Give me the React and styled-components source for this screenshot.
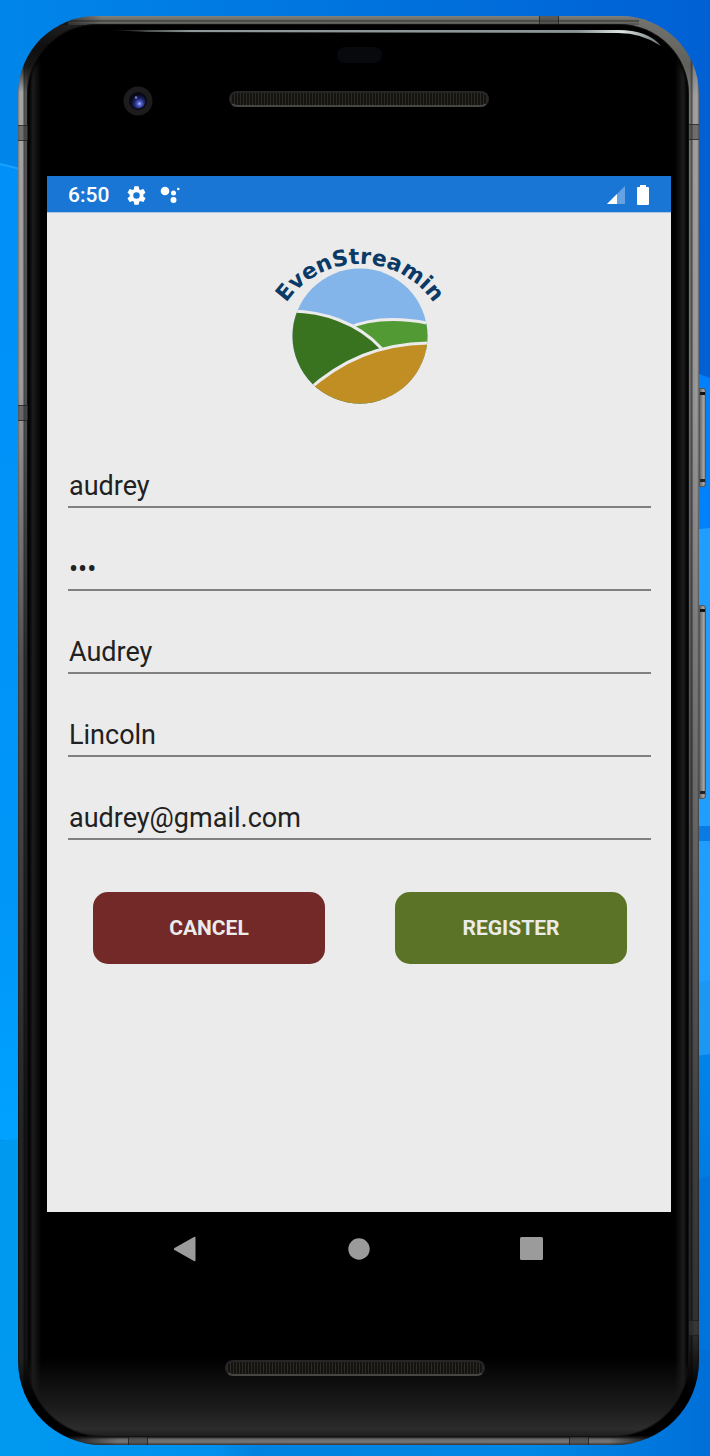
import React, { useState } from "react";
import styled, { createGlobalStyle } from "styled-components";

const GlobalStyle = createGlobalStyle`
  *, *::before, *::after { box-sizing: border-box; }
  body { margin: 0; font-family: Roboto, "Liberation Sans", sans-serif; background: #0085ea; }
  button, input { font: inherit; }
`;

const Desktop = styled.div`
  position: relative;
  display: flex;
  min-height: 100vh;
  padding: 16px 11px 11px 18px;
  overflow: hidden;
  background: linear-gradient(90deg, #0086ea, #0074de 50%, #0060d4);
`;

const Wallpaper = styled.svg`
  position: absolute;
  inset: 0;
  width: 100%;
  height: 100%;
`;

const Phone = styled.div`
  position: relative;
  flex: 1;
  display: flex;
  min-width: 0;
  padding: 8px 10px 8px 9px;
  border-radius: 78px 78px 84px 84px;
  background:
    linear-gradient(90deg, rgba(16, 16, 16, 0.9) 30px, rgba(16, 16, 16, 0) 84px) 0 0 / 100px 9px no-repeat,
    linear-gradient(90deg, #080808 40px, rgba(8, 8, 8, 0) 100px) 0 100% / 120px 9px no-repeat,
    linear-gradient(270deg, #080808 40px, rgba(8, 8, 8, 0) 90px) 100% 100% / 120px 9px no-repeat,
    linear-gradient(180deg, #80807c, #6a6a66 4px, #2c2c2a 5px, #6c6c68 6px, #555 8px) 50px 0 / calc(100% - 110px) 9px no-repeat,
    linear-gradient(0deg, #333, #777 3px, #666 6px, #151515 8px) 50px 100% / calc(100% - 100px) 9px no-repeat,
    linear-gradient(180deg, rgba(0, 0, 0, 0.5), rgba(0, 0, 0, 0.8) 30px, rgba(0, 0, 0, 0.7) 50px, rgba(0, 0, 0, 0) 76px, rgba(0, 0, 0, 0.05) 26%, rgba(0, 0, 0, 0.5) 45%, rgba(0, 0, 0, 0.78) 78%, rgba(0, 0, 0, 0.8) 94%, #000 97%) 0 0 / 50% 100% no-repeat,
    linear-gradient(180deg, rgba(0, 0, 0, 0), rgba(0, 0, 0, 0.2) 50px, rgba(0, 0, 0, 0) 80px, rgba(0, 0, 0, 0.05) 26%, rgba(0, 0, 0, 0.3) 50%, rgba(0, 0, 0, 0.6) 78%, rgba(0, 0, 0, 0.7) 92%, #000 96%) 100% 0 / 50% 100% no-repeat,
    linear-gradient(90deg, #777, #a8a8a8 2px, #a0a0a0 5px, #444 6px, #5c5c5c 8px, #4a4a4a 9px, #777772 calc(100% - 10px), #777 calc(100% - 9px), #444 calc(100% - 7px), #9a9a9a calc(100% - 6px), #a4a4a4 calc(100% - 2px), #666 100%);
`;

const Glass = styled.div`
  flex: 1;
  display: flex;
  flex-direction: column;
  min-width: 0;
  padding: 0 18px 0 20px;
  border-radius: 70px 70px 76px 76px;
  background:
    linear-gradient(0deg, #1c1c1c, #2c2c2c 8px, #1a1a1a 32px, rgba(0, 0, 0, 0) 80px),
    linear-gradient(90deg, #000, #080808 3px, #1c1c1c 6px, #111 9px, #000 14px, #000 calc(100% - 14px), #141414 calc(100% - 8px), #1c1c1c calc(100% - 6px), #000 calc(100% - 1px));
  box-shadow: inset 0 0 0 1px #111, inset 0 5px 3px #000;
`;

const Antenna = styled.span`
  position: absolute;
  border: 1px solid rgba(20, 20, 20, 0.6);
  background: rgba(60, 60, 60, 0.5);
  ${({ $edge, $at }) =>
    $edge === "left" || $edge === "right"
      ? `${$edge}: 0; top: ${$at}; width: 10px; height: 16px; border-width: 1px 0;`
      : `${$edge}: 0; left: ${$at}; width: 20px; height: 8px; border-width: 0 1px;`}
`;

const SideKey = styled.button`
  position: absolute;
  right: -7px;
  top: ${({ $top }) => $top};
  width: 7px;
  height: ${({ $length }) => $length};
  padding: 0;
  border: 1px solid #555;
  border-radius: 0 3px 3px 0;
  background:
    linear-gradient(#111, #111) 0 3px / 100% 3px no-repeat,
    linear-gradient(#222, #222) 0 calc(100% - 4px) / 100% 3px no-repeat,
    linear-gradient(90deg, #6a6a6a, #aaa 80%, #777);
`;

const Sheen = styled.svg`
  position: absolute;
  top: 12px;
  right: 34px;
  width: calc(100% - 124px);
  height: 20px;
`;

const Bezel = styled.div`
  display: flex;
  flex-direction: column;
  align-items: center;
  gap: 23px;
  height: 152px;
  padding-top: 23px;
`;

const Sensor = styled.span`
  width: 45px;
  height: 16px;
  border-radius: 8px;
  background: #08090d;
`;

const BezelRow = styled.div`
  display: grid;
  grid-template-columns: 1fr 260px 1fr;
  align-self: stretch;
`;

const Camera = styled.svg`
  justify-self: center;
  width: 30px;
  height: 30px;
`;

const Speaker = styled.span`
  width: 260px;
  height: 16px;
  margin-top: ${({ $drop }) => $drop || "0"};
  border: 2px solid #262626;
  border-bottom-color: #484644;
  border-radius: 8px;
  background: repeating-linear-gradient(90deg, #2c2a25 0 1px, #14130f 1px 3px);
`;

const Screen = styled.main`
  flex: 1;
  display: flex;
  flex-direction: column;
  background: #ebebeb;
`;

const StatusBar = styled.header`
  display: flex;
  align-items: center;
  justify-content: space-between;
  height: 37px;
  padding: 2px 21px 0;
  border-bottom: 1px solid #a9c8e8;
  background: #1976d4;
  color: #fff;
`;

const StatusGroup = styled.div`
  display: flex;
  align-items: center;
  gap: ${({ $gap }) => $gap};
`;

const Clock = styled.time`
  font-size: 21px;
  line-height: 34px;
  font-weight: 500;
`;

const Form = styled.form`
  display: flex;
  flex-direction: column;
  padding: 17px 20px 40px 21px;
`;

const Logo = styled.svg`
  align-self: center;
  width: 200px;
  height: 190px;
`;

const Fields = styled.div`
  display: flex;
  flex-direction: column;
  gap: 41px;
  margin-top: 46px;
`;

const Field = styled.input`
  width: 100%;
  height: 42px;
  padding: 0 0 0 1px;
  border: 0;
  border-bottom: 2px solid #808080;
  border-radius: 0;
  outline: 0;
  background: transparent;
  color: #212121;
  font-size: 27px;
  line-height: 40px;
`;

const Actions = styled.div`
  display: flex;
  gap: 70px;
  margin-top: 52px;
  padding: 0 24px 0 25px;
`;

const ActionButton = styled.button`
  flex: 1;
  height: 72px;
  padding: 0;
  border: 0;
  border-radius: 15px;
  background: ${({ $tone }) => ($tone === "danger" ? "#732927" : "#5b7326")};
  color: #ebebeb;
  font-size: 21px;
  font-weight: 700;
  text-transform: uppercase;
`;

const NavBar = styled.nav`
  display: flex;
  height: 73px;
  padding: 0 53px;
`;

const NavButton = styled.button`
  flex: 1;
  display: flex;
  justify-content: center;
  align-items: center;
  padding: 0;
  border: 0;
  background: transparent;
`;

const Chin = styled.div`
  display: flex;
  justify-content: center;
  height: 152px;
  padding: 75px 8px 0 0;
`;

const FIELDS = [
  { name: "username", label: "Username", type: "text", value: "audrey" },
  { name: "password", label: "Password", type: "password", value: "abc" },
  { name: "firstName", label: "First name", type: "text", value: "Audrey" },
  { name: "lastName", label: "Last name", type: "text", value: "Lincoln" },
  { name: "email", label: "Email", type: "email", value: "audrey@gmail.com" },
];

function Backdrop() {
  return (
    <Wallpaper viewBox="0 0 710 1456" preserveAspectRatio="none" aria-hidden="true">
      <defs>
        <linearGradient id="leftGlow" x1="0" y1="0" x2="0" y2="1">
          <stop offset="0" stopColor="#0090f8" />
          <stop offset="0.75" stopColor="#0096f8" />
          <stop offset="1" stopColor="#00a2ff" />
        </linearGradient>
        <linearGradient id="rightTop" x1="0" y1="0" x2="0" y2="1">
          <stop offset="0" stopColor="#0080fa" />
          <stop offset="1" stopColor="#0088ff" />
        </linearGradient>
        <linearGradient id="rightLow" x1="0" y1="0" x2="0" y2="1">
          <stop offset="0" stopColor="#0084ea" />
          <stop offset="1" stopColor="#006cd6" />
        </linearGradient>
        <linearGradient id="floor" x1="0" y1="0" x2="1" y2="0">
          <stop offset="0" stopColor="#0099f0" />
          <stop offset="0.3" stopColor="#0090ee" />
          <stop offset="0.36" stopColor="#0082e0" />
          <stop offset="0.75" stopColor="#0088e6" />
          <stop offset="1" stopColor="#006fd8" />
        </linearGradient>
      </defs>
      <path d="M0 164 Q12 167 40 174 V1140 H0Z" fill="url(#leftGlow)" />
      <path d="M0 164 Q12 167 40 174" fill="none" stroke="#1aa0ff" strokeWidth="2" />
      <path d="M0 1141 Q20 1138 40 1137 V1380 H0Z" fill="#0099f0" />
      <path d="M680 367 L710 378 V1060 H680Z" fill="url(#rightTop)" />
      <path d="M680 531 L710 528 V1060 H680Z" fill="#209eff" />
      <rect x="680" y="826" width="30" height="15" fill="#0a7ae4" />
      <path d="M680 985 L710 980 V1060 H680Z" fill="#1c98f4" />
      <path d="M680 1058 L710 1054 V1400 H680Z" fill="url(#rightLow)" />
      <path d="M680 1184 L710 1176 V1400 H680Z" fill="#0074dc" />
      <rect y="1350" width="710" height="106" fill="url(#floor)" />
    </Wallpaper>
  );
}

function BrandLogo() {
  return (
    <Logo viewBox="260 230 200 190" role="img" aria-label="EvenStreamin">
      <defs>
        <clipPath id="disc">
          <circle cx="360" cy="336" r="67.5" />
        </clipPath>
        <path id="arc" d="M271 353 A89 89 0 0 1 449 353" />
      </defs>
      <g clipPath="url(#disc)">
        <rect x="290" y="266" width="140" height="140" fill="#83b5ea" />
        <path d="M345 329 C372 317 400 317 432 324 V350 H370Z" fill="#529a33" stroke="#ebebeb" strokeWidth="3" />
        <path d="M286 311 C322 310 358 323 381 348 V410 H286Z" fill="#39731f" stroke="#ebebeb" strokeWidth="3" />
        <path d="M306 392 C340 361 380 342 436 343 V412 H306Z" fill="#c18e24" stroke="#ebebeb" strokeWidth="3" />
      </g>
      <text fill="#0b3a66" fontFamily='"DejaVu Sans", sans-serif' fontWeight="700" fontSize="22" textAnchor="middle">
        <textPath href="#arc" startOffset="50%">EvenStreamin</textPath>
      </text>
    </Logo>
  );
}

function RegisterForm() {
  const [values, setValues] = useState(() => Object.fromEntries(FIELDS.map((f) => [f.name, f.value])));
  return (
    <Form onSubmit={(e) => e.preventDefault()}>
      <BrandLogo />
      <Fields>
        {FIELDS.map(({ name, label, type }) => (
          <Field
            key={name}
            name={name}
            type={type}
            aria-label={label}
            autoComplete="off"
            spellCheck={false}
            value={values[name]}
            onChange={(e) => setValues({ ...values, [name]: e.target.value })}
          />
        ))}
      </Fields>
      <Actions>
        <ActionButton type="button" $tone="danger">Cancel</ActionButton>
        <ActionButton type="submit" $tone="success">Register</ActionButton>
      </Actions>
    </Form>
  );
}

export default function App() {
  return (
    <>
      <GlobalStyle />
      <Desktop>
        <Backdrop />
        <Phone>
          <Glass>
            <Bezel>
              <Sensor />
              <BezelRow>
                <Camera viewBox="0 0 30 30" aria-hidden="true">
                  <defs>
                    <radialGradient id="lens" cx="0.6" cy="0.68" r="0.6">
                      <stop offset="0" stopColor="#b4bcff" />
                      <stop offset="0.25" stopColor="#4a5ac4" />
                      <stop offset="0.6" stopColor="#1c2260" />
                      <stop offset="1" stopColor="#080a18" />
                    </radialGradient>
                  </defs>
                  <circle cx="15" cy="15" r="14.5" fill="#1d1b1d" />
                  <circle cx="15" cy="15" r="9" fill="#090910" />
                  <circle cx="15" cy="15" r="7.5" fill="url(#lens)" />
                  <circle cx="13" cy="11.5" r="1.3" fill="#6f7fd8" />
                </Camera>
                <Speaker $drop="5px" />
              </BezelRow>
            </Bezel>
            <Screen>
              <StatusBar>
                <StatusGroup $gap="16px">
                  <Clock>6:50</Clock>
                  <StatusGroup $gap="12px">
                    <svg width="23" height="23" viewBox="0 0 24 24" fill="#fff" aria-hidden="true">
                      <path d="M19.14 12.94c.04-.3.06-.61.06-.94s-.02-.64-.07-.94l2.03-1.58a.49.49 0 0 0 .12-.61l-1.92-3.32a.49.49 0 0 0-.59-.22l-2.39.96a7 7 0 0 0-1.62-.94l-.36-2.54a.48.48 0 0 0-.48-.41h-3.84a.47.47 0 0 0-.47.41l-.36 2.54c-.59.24-1.13.57-1.62.94l-2.39-.96a.48.48 0 0 0-.59.22L2.74 8.87a.47.47 0 0 0 .12.61l2.03 1.58a6.6 6.6 0 0 0 0 1.88l-2.03 1.58a.49.49 0 0 0-.12.61l1.92 3.32c.12.22.37.29.59.22l2.39-.96c.5.38 1.03.7 1.62.94l.36 2.54c.05.24.24.41.48.41h3.84c.24 0 .44-.17.47-.41l.36-2.54c.59-.24 1.13-.56 1.62-.94l2.39.96c.22.08.47 0 .59-.22l1.92-3.32a.47.47 0 0 0-.12-.61zM12 15.4a3.4 3.4 0 1 1 0-6.8 3.4 3.4 0 0 1 0 6.8z" />
                    </svg>
                    <svg width="20" height="20" viewBox="0 0 20 20" fill="#fff" aria-hidden="true">
                      <circle cx="5" cy="6" r="4.3" />
                      <circle cx="13.500" cy="8" r="2.500" />
                      <circle cx="13.500" cy="15" r="3" />
                      <circle cx="18.300" cy="4" r="1.300" />
                    </svg>
                  </StatusGroup>
                </StatusGroup>
                <StatusGroup $gap="10px">
                  <svg width="20" height="20" viewBox="0 0 20 20" aria-hidden="true">
                    <path d="M19 1V19H1Z" fill="#64a2e3" />
                    <path d="M11 9V19H1Z" fill="#fff" />
                  </svg>
                  <svg width="14" height="20" viewBox="0 0 14 20" fill="#fff" aria-hidden="true">
                    <path d="M4 0h6v2h2a1 1 0 0 1 1 1v16a1 1 0 0 1-1 1H2a1 1 0 0 1-1-1V3a1 1 0 0 1 1-1h2Z" />
                  </svg>
                </StatusGroup>
              </StatusBar>
              <RegisterForm />
            </Screen>
            <NavBar>
              <NavButton type="button" aria-label="Back">
                <svg width="24" height="26" viewBox="0 0 24 26" fill="#9b9b9b">
                  <path d="M20 1 Q21.500 0 21.500 2V24Q21.500 26 20 25L0.500 14Q-1 13 0.500 12Z" />
                </svg>
              </NavButton>
              <NavButton type="button" aria-label="Home">
                <svg width="22" height="22" viewBox="0 0 22 22" fill="#9b9b9b">
                  <circle cx="11" cy="11" r="10.700" />
                </svg>
              </NavButton>
              <NavButton type="button" aria-label="Overview">
                <svg width="23" height="23" viewBox="0 0 23 23" fill="#9b9b9b">
                  <rect width="23" height="23" rx="1.500" />
                </svg>
              </NavButton>
            </NavBar>
            <Chin>
              <Speaker />
            </Chin>
          </Glass>
          <Sheen viewBox="0 0 557 20" preserveAspectRatio="none" aria-hidden="true">
            <defs>
              <linearGradient id="sheen" x1="0" x2="1">
                <stop offset="0" stopColor="#a0a8a8" stopOpacity="0" />
                <stop offset="0.15" stopColor="#8f9999" />
                <stop offset="0.85" stopColor="#8a9494" />
                <stop offset="0.93" stopColor="#dfe6e6" />
                <stop offset="1" stopColor="#6a7474" />
              </linearGradient>
            </defs>
            <path d="M0 2 H510 Q540 2 553 18 Q534 5 510 5 L40 4Z" fill="url(#sheen)" />
          </Sheen>
          <Antenna $edge="left" $at="109px" />
          <Antenna $edge="left" $at="389px" />
          <Antenna $edge="right" $at="108px" />
          <Antenna $edge="right" $at="1304px" />
          <Antenna $edge="top" $at="521px" />
          <Antenna $edge="bottom" $at="110px" />
          <Antenna $edge="bottom" $at="551px" />
          <SideKey type="button" aria-label="Power" $top="372px" $length="99px" />
          <SideKey type="button" aria-label="Volume" $top="589px" $length="194px" />
        </Phone>
      </Desktop>
    </>
  );
}
